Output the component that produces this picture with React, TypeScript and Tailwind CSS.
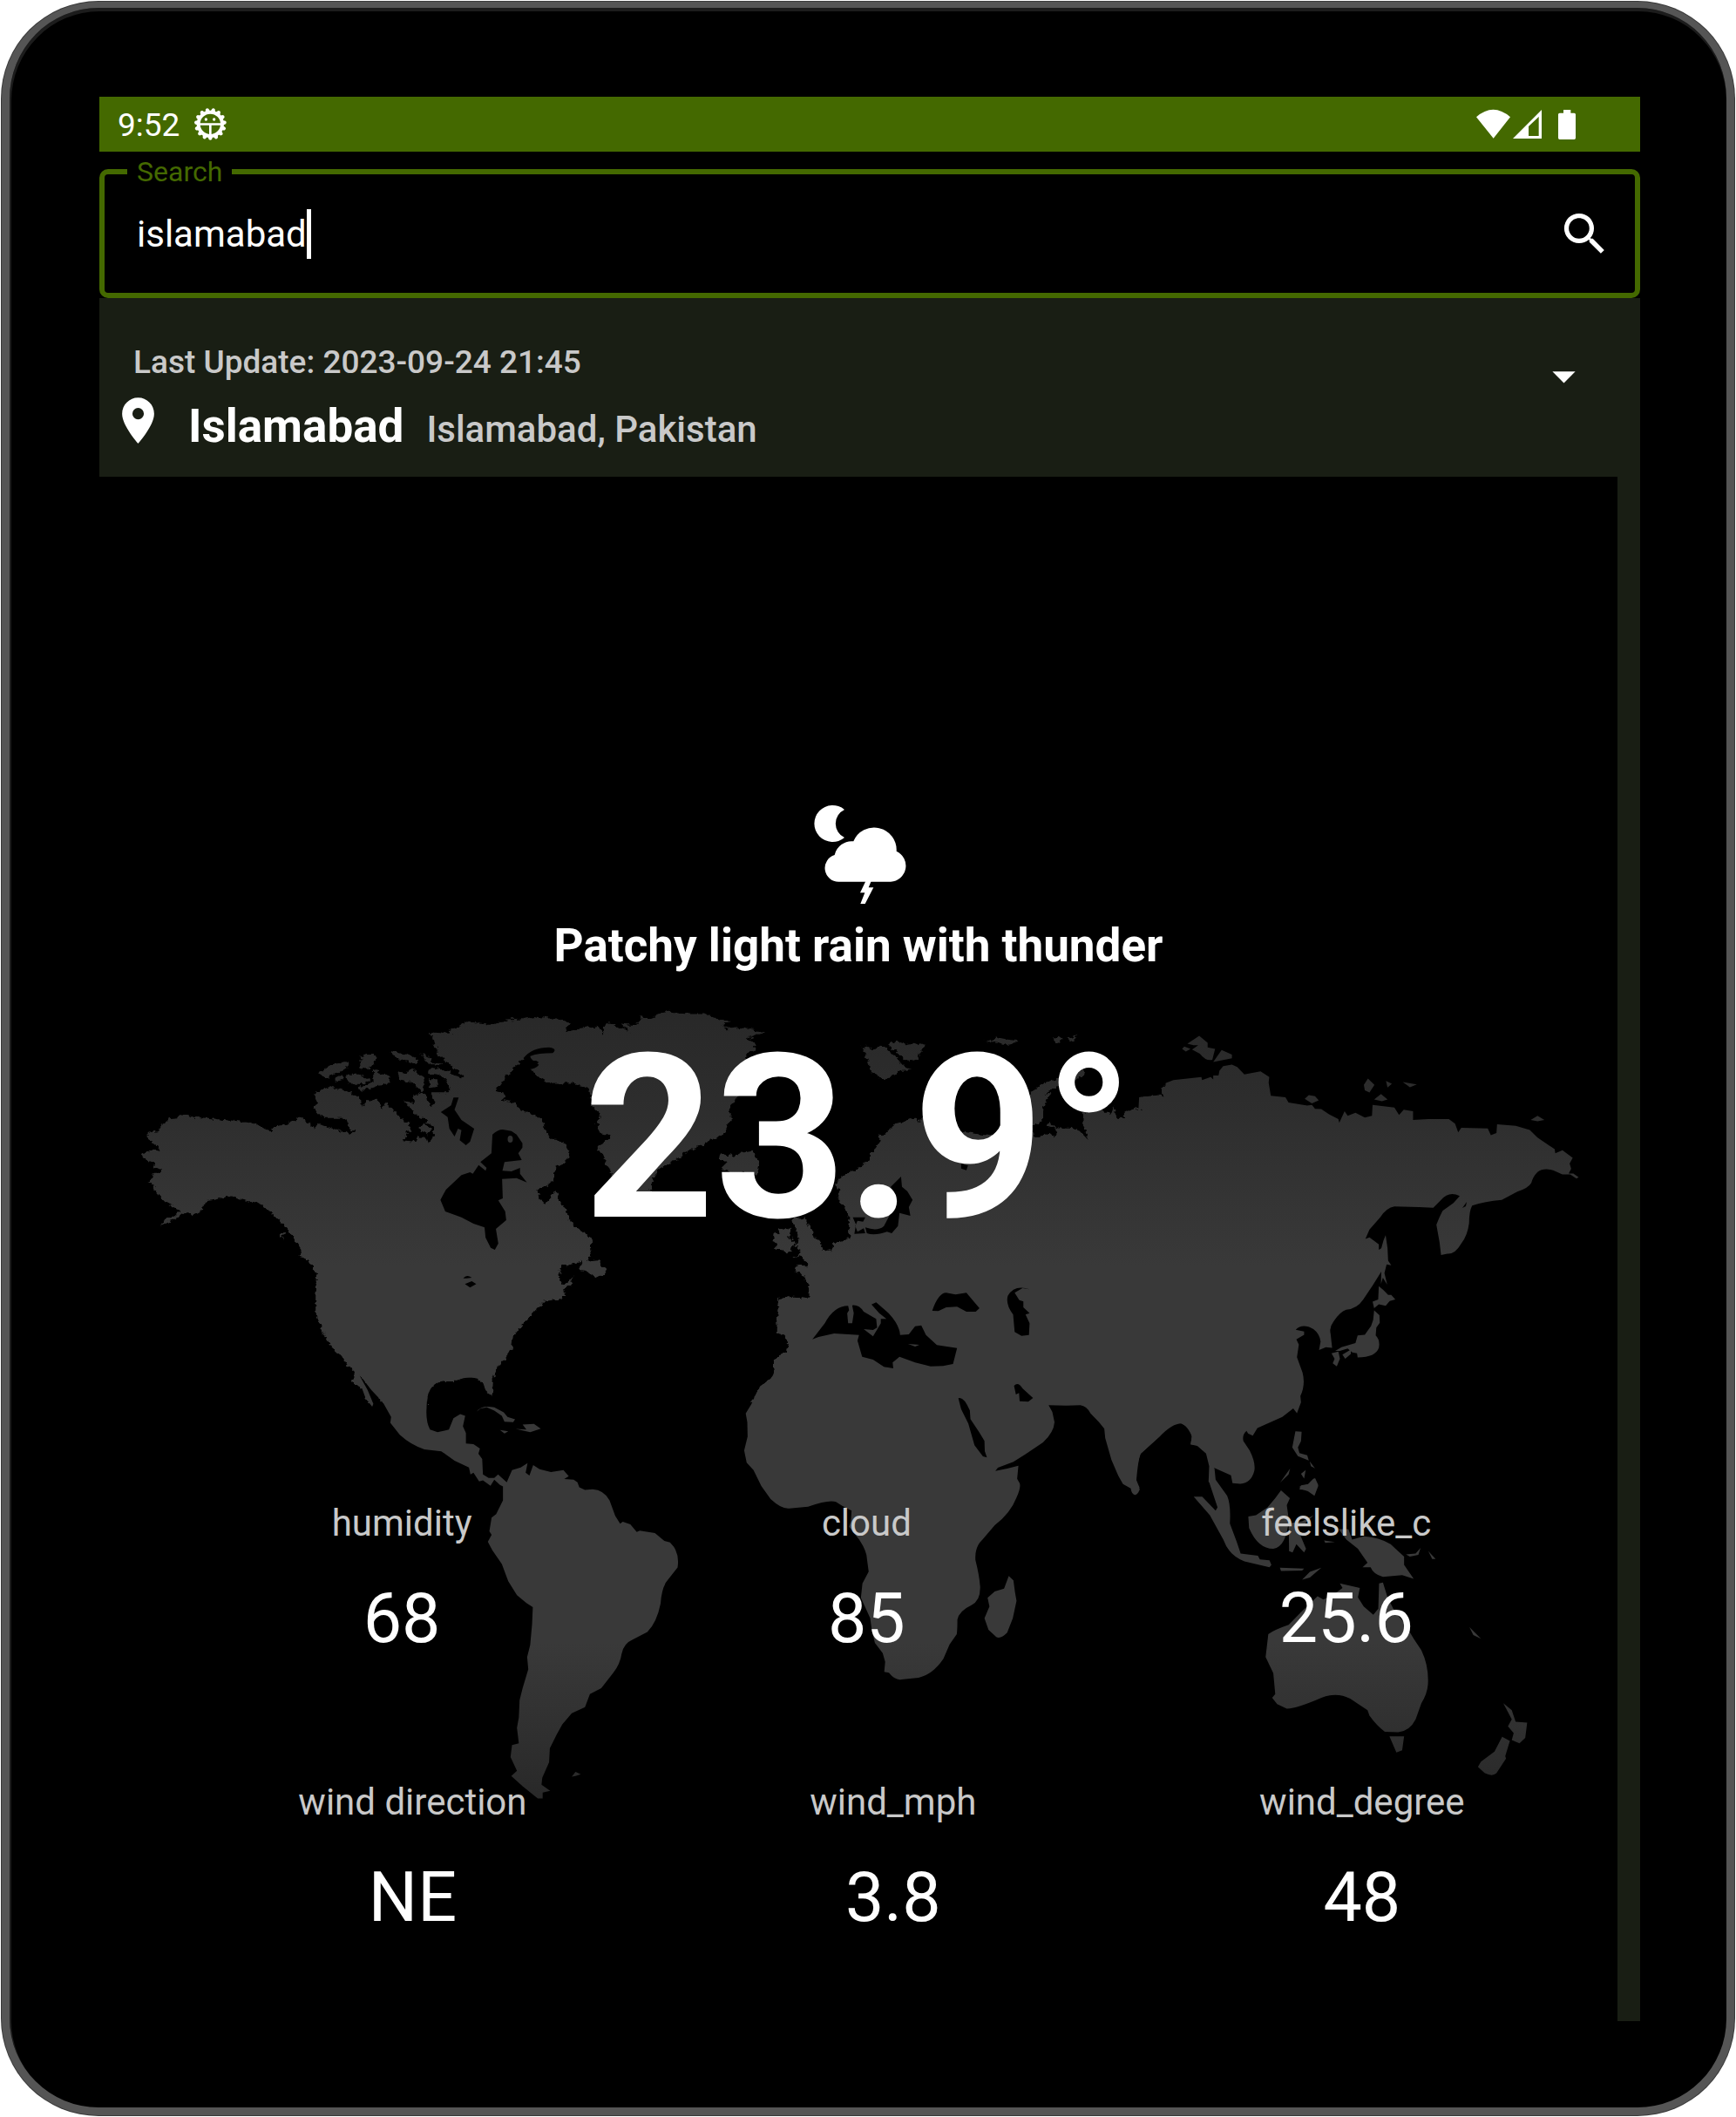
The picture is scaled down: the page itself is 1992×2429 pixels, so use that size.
import { useState } from "react";

function BugIcon() {
  const teeth = Array.from({ length: 15 }, (_, i) => i * 24);
  return (
    <svg className="size-[39px]" viewBox="36 33 117 117" fill="#fff" aria-hidden="true">
      <circle cx="94" cy="91" r="41" fill="none" stroke="#fff" strokeWidth="12" />
      {teeth.map((angle) => (
        <path key={angle} d="M84 130 L89 144 Q94 149 99 144 L104 130Z" transform={`rotate(${angle} 94 91)`} />
      ))}
      <path d="M54 88H134V95H54Z M90 95H98V132H90Z" />
      <circle cx="79" cy="75" r="5" />
      <circle cx="107" cy="75" r="5" />
    </svg>
  );
}

function SystemIcons() {
  return (
    <svg className="h-[60px] w-[134px]" viewBox="0 0 402 180" fill="#fff" aria-hidden="true">
      <path d="M30 64 Q88 13 147 64 L89 137Z" />
      <path fillRule="evenodd" d="M255 39V138H156Z M210 96V129H245V63Z" />
      <path d="M330 39H355V50H367Q372 50 372 55V136Q372 141 367 141H317Q312 141 312 136V55Q312 50 317 50H330Z" />
    </svg>
  );
}

function StormIcon() {
  return (
    <svg className="h-[140px] w-[130px]" viewBox="0 0 390 420" fill="#fff" aria-hidden="true">
      <path d="M147 57 A63 63 0 1 0 147 153 A53 53 0 0 1 147 57Z" />
      <path d="M127 305 A47 47 0 0 1 113 213 A60 60 0 0 1 178 166 A77 77 0 0 1 326 200 A55 55 0 0 1 306 305Z" />
      <path d="M220 303H239L230 325H247L218 381H202L217 343H201Z" />
    </svg>
  );
}

function WorldMap() {
  return (
    <svg
      className="absolute inset-0 h-full w-full"
      viewBox="114 547 1742 1772"
      preserveAspectRatio="xMidYMid meet"
      aria-hidden="true"
    >
      <defs>
        <linearGradient id="mapShade" gradientUnits="userSpaceOnUse" x1="0" y1="1150" x2="0" y2="2070">
          <stop offset="0" stopColor="#282828" />
          <stop offset="0.12" stopColor="#2d2d2d" />
          <stop offset="0.33" stopColor="#393939" />
          <stop offset="0.8" stopColor="#393939" />
          <stop offset="1" stopColor="#282828" />
        </linearGradient>
        <filter id="coast" x="-2%" y="-2%" width="104%" height="104%">
          <feTurbulence type="fractalNoise" baseFrequency="0.07" numOctaves="2" seed="4" result="noise" />
          <feDisplacementMap in="SourceGraphic" in2="noise" scale="20" xChannelSelector="R" yChannelSelector="G" />
        </filter>
        <mask id="land" maskUnits="userSpaceOnUse" x="114" y="547" width="1742" height="1772">
          <g fill="#fff">
            {/* North America */}
            <g transform="translate(140 1130) scale(.39541 .33333)" filter="url(#coast)">
              <path d="M180 442L190 450 205 455 230 457 260 460 300 466 330 468 360 474 380 478 410 490 432 508 440 490 470 480 500 465 515 450 540 475 560 495 570 480 600 490 630 500 665 512 675 505 650 480 655 465 640 458 590 458 570 445 558 425 565 400 562 370 600 352 640 362 655 368 675 378 690 385 692 408 700 415 715 395 745 400 752 428 765 408 785 425 800 450 830 475 838 500 825 505 828 522 818 535 850 540 858 520 885 530 890 545 905 520 905 490 885 475 885 460 870 458 850 445 835 420 815 400 850 405 845 380 870 372 885 385 890 410 900 420 905 400 895 370 950 370 955 360 940 325 915 308 890 305 895 285 950 295 960 310 975 315 985 322 998 310 970 290 965 280 940 260 920 235 905 200 895 162 940 170 950 180 990 185 945 160 1000 140 1200 140 1180 250 1165 252 1130 290 1095 335 1080 365 1105 370 1112 388 1100 395 1145 405 1155 435 1195 445 1222 465 1225 490 1240 530 1260 530 1285 548 1298 570 1290 610 1258 628 1252 670 1235 690 1205 705 1210 735 1230 755 1245 730 1258 708 1268 745 1285 765 1305 825 1340 850 1360 870 1362 930 1350 950 1385 945 1390 965 1408 985 1395 1005 1370 1003 1350 985 1325 980 1335 953 1275 970 1268 1000 1275 1028 1290 1030 1310 1003 1300 1035 1283 1050 1285 1070 1270 1082 1225 1088 1200 1120 1165 1165 1135 1210 1130 1250 1115 1285 1085 1320 1075 1360 1072 1412 1060 1400 1050 1370 1030 1352 1000 1350 965 1362 925 1362 900 1380 888 1405 885 1440 760 1440 735 1400 688 1340 700 1380 725 1440 715 1440 700 1395 670 1365 678 1335 655 1310 640 1280 607 1245 585 1200 570 1155 562 1130 562 1070 567 1005 550 965 530 940 515 935 520 910 497 870 470 825 430 780 395 750 350 740 312 727 270 740 240 745 235 775 210 790 180 785 150 810 125 820 110 832 120 812 145 800 170 775 130 750 100 715 93 700 98 690 75 680 90 655 115 640 95 630 90 610 70 605 55 582 95 565 108 575 100 550 75 530 75 510 105 505 115 480 140 462 160 460Z" />
              <path d="M567 305L600 280 640 265 660 265 655 285 625 305 590 320ZM690 268L700 255 688 248 715 240 738 240 735 265 720 288 692 285ZM775 228L800 232 830 240 855 255 855 270 825 262 795 250ZM650 308L690 308 722 328 700 342 655 340ZM615 322L635 310 645 325 625 332ZM685 355L730 335 728 290 745 300 760 305 778 310 775 340 740 345 700 362ZM800 300L820 305 840 290 870 310 880 340 870 367 840 335 805 325ZM868 235L895 250 900 268 932 272 925 280 890 275ZM888 325L915 325 918 350 892 355Z" />
              <path d="M860 495L878 478 898 498 885 515ZM459 853H474L466 875ZM1105 610L1140 622 1150 632 1130 642 1104 640Z" />
            </g>
            {/* Greenland */}
            <g transform="translate(500 900) scale(.57398 .35714)" filter="url(#coast)">
              <path d="M0 860L25 840 0 820 0 795 30 800 40 785 60 765 110 772 130 758 170 755 200 745 225 752 245 752 268 768 255 795 325 775 332 800 340 765 355 768 392 800 370 768 400 775 410 745 425 752 450 735 465 730 500 735 540 735 560 750 590 765 572 770 585 785 620 780 657 797 625 815 640 835 625 870 620 900 605 1000 590 1030 590 1080 570 1130 520 1165 480 1205 445 1235 425 1320 390 1350 350 1250 335 1190 325 1170 348 1130 320 1110 330 1060 310 1030 310 990 290 965 270 958 225 960 200 935 190 910 207 895 175 880 150 920 117 985 50 985 60 935 30 900Z" />
            </g>
            {/* Central and South America */}
            <g transform="translate(140 1500) scale(.43367 .39541)">
              <path d="M515 0L517 25 535 65 555 112 598 160 618 190 612 212 635 235 645 265 662 288 665 280 650 240 632 205 628 195 660 240 690 275 712 318 710 335 735 370Q765 400 800 412L845 418 880 445 918 465 922 485 930 480 945 505 955 502 975 518 985 500 1000 515 1008 520 1008 560 990 600 978 610 972 650 978 660 968 680 980 705 1005 745 1022 795 1045 835 1070 858 1087 870 1085 920 1080 980 1072 1015 1075 1050 1060 1105 1052 1140 1050 1190 1045 1220 1050 1265 1032 1270 1028 1305 1045 1345 1030 1360 1060 1390 1100 1425 1113 1425 1113 1408 1133 1403 1110 1385 1112 1365 1130 1320 1132 1280 1150 1240 1165 1210 1190 1178 1225 1160 1238 1122 1268 1105 1300 1060Q1318 1035 1322 1005 1328 975 1350 965L1390 942Q1415 915 1425 860 1428 810 1445 790L1470 755Q1475 720 1460 695L1450 682 1435 678 1410 655 1370 648 1362 652 1345 630 1325 622 1318 628 1305 605 1290 560Q1275 530 1245 528L1225 530 1210 522 1205 508 1195 500 1170 498 1182 490 1168 472 1135 478 1105 470 1088 458 1078 488 1068 480 1073 452 1055 465 1032 472 1018 508 995 485 985 495 970 495 955 485 953 440 943 425 947 410 930 397 910 395 910 365 902 345 908 315 895 310 877 322 865 355 835 362 815 355Q803 330 806 290 805 245 825 225 840 210 885 212 915 198 945 208L955 218 962 240 976 255Q982 240 978 210 980 185 995 165 1020 140 1027 122 1030 95 1035 80 1050 50 1100 0Z" />
              <path d="M938 303Q950 283 985 290L1010 305 1020 318 1040 325 1035 333 1012 332 1005 315 985 300 965 290 948 294ZM1042 353L1070 355 1060 340 1090 338 1108 352 1080 362ZM1000 356L1022 360 1012 366ZM1190 1362L1200 1348 1214 1355 1200 1360Z" />
            </g>
            {/* Europe and western Asia */}
            <g transform="translate(800 1130) scale(.35714 .33333)" filter="url(#coast)">
              <path d="M1568 325L1510 340 1490 360 1500 388 1490 380 1430 385 1420 405 1420 425 1437 435 1410 425 1380 437 1368 448 1378 460 1345 458 1340 415 1330 445 1310 435 1290 420 1240 440 1238 485 1252 510 1253 530 1230 505 1200 492 1150 490 1130 473 1125 485 1155 495 1150 525 1135 512 1120 515 1085 525 1075 480 1110 470 1108 435 1125 395 1135 372 1115 375 1165 345 1220 320 1248 305 1240 292 1200 310 1120 335 1075 365 1040 420 1030 500 940 520 820 500 725 455 710 475 703 458 685 460 655 475 630 485 600 520 580 513 590 540 575 560 560 575 552 600 520 630 500 640 475 655 455 670 440 690 458 705 450 720 460 745 480 780 488 800 488 870 465 880 435 890 432 912 402 918 395 885 380 870 360 835 345 800 305 805 320 845 328 870 312 900 332 912 325 930 300 942 330 934 352 955 355 970 318 968 315 985 335 995 358 1030 360 1070 350 1080 310 1073 258 1080 262 1120 255 1160 258 1200 275 1205 295 1230 285 1260 255 1280 245 1310 248 1335 235 1360 200 1385 175 1440 1568 1440Z" />
              <path d="M248 855L262 855 260 845 280 835 300 840 295 870 315 885 305 900 300 918 285 922 270 912 243 912 258 895 245 882ZM68 595L80 578 98 592 110 585 120 590 140 578 180 572 188 588 200 605 190 650 110 645 75 632 95 612ZM528 215L548 212 565 222 590 205 612 225 640 250 655 270 668 285 692 290 650 298 605 325 585 318 555 295 550 260ZM620 205L640 193 670 205 695 200 733 210 715 230 710 255 690 262 665 258 640 225 622 220ZM925 195L970 182 1005 190 1038 193 995 208 965 197ZM1145 185L1160 178 1175 182 1170 195 1152 203ZM1190 186L1222 170 1215 185 1198 192Z" />
            </g>
            {/* Eastern Asia and Japan */}
            <g transform="translate(1300 1150) scale(.35714)">
              <path d="M0 343L25 355 38 348 18 340 20 305 85 298 100 305 98 290 90 275 105 272 105 260 130 250 220 240 222 250 250 240 258 248 258 235 275 235 278 220 290 205 318 200 335 208 358 232 410 222 438 240 436 258 443 300 490 305 500 322 560 332 575 330 585 342 605 343 630 360 660 375 663 387 680 350 690 365 715 355 745 370 768 365 770 330 840 338 855 362 870 345 900 350 900 378 950 375 1015 375 1035 390 1045 418 1055 403 1140 405 1150 427 1168 420 1170 392 1230 397 1275 410 1300 435 1355 472 1357 485 1380 475 1413 500 1403 518 1408 535 1400 550 1415 550 1432 562 1425 566 1405 553 1380 553 1350 540Q1320 530 1300 545 1285 560 1280 580 1270 597 1235 608L1185 635Q1130 640 1090 653 1080 670 1080 710 1075 750 1055 775 1035 810 1010 808L990 812 985 770 975 715 985 690 995 670 1030 645 1050 622Q1015 605 990 635L965 660 920 658 840 656Q815 660 795 690L760 730 747 760 760 755 790 778 790 795 798 790 805 765 812 748 818 790 820 830 830 845 815 842 808 870 817 907 803 885 797 905 798 865 770 910 740 955Q720 985 685 988 665 995 645 1025 630 1045 635 1065L640 1110 620 1108 598 1117 603 1090Q600 1065 580 1050 545 1030 523 1052L550 1058 550 1068 525 1083 533 1100 527 1140 545 1190Q555 1230 538 1265L540 1285 527 1320 515 1305 480 1332 400 1368 385 1392 370 1385 365 1377Q350 1390 355 1410L375 1440Q395 1480 390 1505 380 1545 345 1547L320 1545 315 1520 260 1495 258 1525 280 1568 262 1568 243 1540 245 1490 235 1450 207 1425 185 1420 190 1395Q170 1350 145 1352 120 1355 85 1395L25 1450Q12 1480 10 1535L22 1568 0 1568Z" />
              <path d="M790 912L805 925 820 940 830 940 843 955 825 960 812 975 790 970 775 983 770 962 788 955ZM775 990L792 1005 793 1030 782 1045 780 1070Q795 1085 790 1110 780 1140 722 1141L720 1128 705 1125 690 1112 665 1120 650 1120 670 1108 715 1095 722 1070 745 1068 765 1040 772 1020ZM638 1128L660 1122 665 1145 655 1170 642 1160 648 1145ZM673 1132L700 1116 700 1130 682 1145ZM522 1378L542 1380 540 1410 530 1430 535 1448 560 1455 565 1472 530 1458 512 1430ZM568 1475L585 1497 572 1490ZM473 1543L505 1498 500 1517ZM540 1515L555 1503 550 1530ZM535 1565L540 1552 565 1548 585 1528 595 1550 585 1568Z" />
              <path d="M158 150L165 142 185 150 170 158ZM175 133L213 108 240 130 240 145 264 150 255 185Q235 190 215 165L190 152 210 138 195 138ZM258 192L285 153 318 168 318 180ZM742 265L755 245 776 265 760 290 745 283ZM813 253L832 262 818 274ZM867 256L912 264 890 273ZM775 312L797 295 818 312 800 318ZM552 310L565 298 585 302 597 315 575 325ZM1278 378L1300 365 1322 378 1300 382Z" />
            </g>
            {/* Africa, Arabia and India */}
            <g transform="translate(820 1560) scale(.35714 .33333)">
              <path d="M190 0L192 35Q190 60 170 75L148 90 132 120 120 150 100 185 105 215 106 265 95 313 103 355 125 380 150 435 180 480Q215 515 240 512L300 506Q370 480 390 490L410 503 440 520 438 555 432 575 465 620Q490 660 490 690L495 730 475 770 470 820 485 855 500 890 505 930 515 975 540 1010 548 1040 545 1075 560 1078Q580 1105 600 1101L655 1095Q700 1085 735 1030L755 980 778 945Q780 930 780 895 785 865 825 845 855 830 853 780 850 740 838 690 835 645 860 620L900 570Q950 530 970 475 985 440 980 425L972 410 976 365 940 375 902 383 910 372 960 352 1000 325 1055 285Q1090 250 1092 215L1085 180 1073 157 1130 158 1175 157Q1195 160 1208 185L1235 215 1252 238 1255 270 1275 345 1297 400 1312 428 1337 443Q1340 465 1352 466 1365 460 1365 440L1355 415Q1360 350 1368 325L1430 265Q1470 220 1500 220 1530 235 1533 265L1530 292 1550 295 1568 312 1568 0Z" />
              <path d="M945 745L960 760 965 800 970 830 958 890 940 940Q920 962 905 955L880 930 867 890 883 850 877 820 900 798 930 788Z" />
            </g>
            {/* South-east Asia and Oceania */}
            <g transform="translate(1300 1600) scale(.44133 .5287)">
              <path d="M200 158L212 160 215 185 245 220Q255 240 252 280L270 320 280 345 325 350 330 358 355 360 360 370 355 375 290 362Q250 350 235 315L200 262 158 222 180 222 215 252 220 245 200 195ZM382 376L445 378 440 382 385 383ZM440 402L460 385 490 376 460 397ZM370 225L385 208 408 225 400 240 405 270Q400 330 365 335 325 335 302 290L300 265 320 262 350 245ZM405 280L440 275 470 262 445 282 425 285 450 335 445 343 425 325 415 343 406 340ZM433 200L455 195 470 182 482 198 472 220 455 210 437 205Z" />
              <path d="M535 292L560 292 570 315 600 308Q640 310 670 325L705 352 705 370 730 400 700 392 650 396Q625 390 618 375L597 375 610 365 585 335 555 315ZM497 317L525 320 500 322ZM710 347L735 345 748 333 742 348 720 352ZM768 340L787 357 778 357ZM875 505L905 530 885 522Z" />
              <path d="M345 570L352 520Q370 510 405 500L440 470 480 438 495 445 520 435 545 420 538 410 590 420 585 440 600 460 625 478 638 465 640 410 650 408 662 440 680 470 705 495 730 530 750 555Q770 590 767 630 765 650 750 670L735 705Q720 730 690 733L655 732Q635 720 615 697L610 685 565 660Q530 645 490 658 430 680 400 682L375 672 362 658 370 650 365 605ZM667 742L705 742 700 772 685 777ZM963 670L985 685 995 710 1025 712 1020 745 1005 757 985 750 990 735 975 720 985 705ZM960 743L980 752 968 785 970 790 945 822Q935 830 915 822L897 808 905 797 940 775Z" />
            </g>
          </g>
          {/* Inland waters */}
          <g fill="#000">
            <g transform="translate(140 1130) scale(.39541 .33333)">
              <path d="M1075 515Q1090 498 1105 498L1130 503 1145 515 1162 545 1162 560 1150 580 1160 603 1110 610 1104 640 1130 642 1155 630 1155 650 1175 680 1145 665 1103 668 1105 735 1092 742 1112 780 1115 810 1085 840 1092 890 1082 912 1070 905 1055 870 1052 835 1020 822 985 800 938 780 924 740 940 705 985 655 1010 645 1018 650 1035 620 1055 640 1058 630 1040 610 1072 580ZM925 438L955 415 962 388 977 388 965 430 985 465 1022 495 1010 540 998 552 980 535 985 500 975 495 965 522 950 495 945 455ZM1165 252Q1190 215 1240 215 1265 220 1250 235 1210 235 1185 245 1182 255 1210 275 1200 290 1180 290ZM990 1010Q1000 995 1015 1008L1000 1010ZM995 1030L1015 1020 1028 1030 1010 1042Z" />
            </g>
            <g transform="translate(800 1130) scale(.35714 .33333)">
              <path d="M655 660L622 695 640 740 620 790 600 830Q580 850 540 835L545 855Q570 865 610 850L625 855 645 830 650 785 685 795 680 765 692 740 675 710 658 695ZM848 616L870 622 865 638 848 632Z" />
              <path d="M500 800H540L533 815 515 812 508 830 515 850 535 838 540 855 505 857 510 825Z" />
              <path d="M755 1122Q775 1060 800 1060L830 1066 865 1060 885 1085 907 1113 895 1125 865 1125 835 1108 800 1110 775 1123ZM1068 1048L1045 1044 1020 1060 1035 1085 1048 1090 1048 1110 1068 1130 1055 1135 1068 1165 1066 1205 1042 1208 1020 1195 1015 1135Q990 1100 998 1070 1020 1030 1068 1048Z" />
              <path d="M370 1220L410 1165Q440 1105 485 1105L488 1120 482 1130 485 1165 498 1165 503 1130 498 1103Q520 1100 535 1125L575 1150 578 1180 565 1188 535 1185 565 1210 590 1165 590 1150 608 1150 585 1130 560 1100 575 1093 615 1130Q650 1170 652 1205L680 1203 700 1175 720 1172 735 1205 770 1240 835 1250 822 1305 790 1312 750 1313 700 1300 650 1280 628 1300 630 1320 600 1315 565 1290 530 1280 515 1225 520 1205 440 1200 390 1212Z" />
            </g>
            <g transform="translate(820 1560) scale(.35714 .33333)">
              <path d="M783 133Q800 125 820 175L822 205 850 250 867 280 868 315 875 337 862 333 835 295 815 220 792 170ZM962 90Q975 75 990 100L1023 132 1008 145 980 143 978 115 968 120Z" />
            </g>
            <path d="M1678 1386L1683 1379 1682 1384Z" />
          </g>
          <path fill="#fff" d="M1042 1542L1055 1543 1050 1545ZM941 1507L948 1507 945 1510Z" />
          <ellipse cx="585.5" cy="1307" rx="3" ry="4" fill="#fff" />
        </mask>
      </defs>
      <rect x="114" y="547" width="1742" height="1772" fill="url(#mapShade)" mask="url(#land)" />
    </svg>
  );
}

function Stat({ label, value }: { label: string; value: string }) {
  return (
    <div className="flex flex-col items-center gap-[39px]">
      <dt className="text-[42px] leading-[49px] text-[#c9c9c9]">{label}</dt>
      <dd className="text-[79px] leading-[93px] text-white">{value}</dd>
    </div>
  );
}

const currentStats = [
  { label: "humidity", value: "68" },
  { label: "cloud", value: "85" },
  { label: "feelslike_c", value: "25.6" },
];

const windStats = [
  { label: "wind direction", value: "NE" },
  { label: "wind_mph", value: "3.8" },
  { label: "wind_degree", value: "48" },
];

function StatRow({ stats }: { stats: { label: string; value: string }[] }) {
  return (
    <dl className="flex justify-around">
      {stats.map((stat) => (
        <Stat key={stat.label} label={stat.label} value={stat.value} />
      ))}
    </dl>
  );
}

export default function App() {
  const [query, setQuery] = useState("islamabad");

  return (
    <div className="flex min-h-screen flex-col bg-white p-px font-[Roboto,sans-serif]">
      <div className="flex flex-1 flex-col rounded-[112px] bg-[#3a3a3a] p-px">
        <div className="flex flex-1 flex-col rounded-[111px] border-[9px] border-t-[7px] border-[#555] bg-black pt-[102px] pr-[99px] pb-[99px] pl-[103px] shadow-[inset_1px_3px_0_1px_#1c1c1c]">
          <header className="flex h-[63px] items-center justify-between bg-[#446900] pr-16 pl-[21px] text-white">
            <div className="flex items-center gap-4">
              <time className="pt-[2px] text-[37px] leading-[44px]">9:52</time>
              <BugIcon />
            </div>
            <SystemIcons />
          </header>

          <form role="search" className="mt-1" onSubmit={(e) => e.preventDefault()}>
            <fieldset className="min-w-0 rounded-[10px] border-6 border-[#446900] px-[26px]">
              <legend className="px-[11px] text-[32px] leading-[38px] text-[#446900]">
                <label htmlFor="city">Search</label>
              </legend>
              <div className="mb-4 flex h-[104px] items-center justify-between pl-[11px]">
                <div className="flex min-w-0 items-center">
                  <input
                    id="city"
                    type="text"
                    value={query}
                    onChange={(e) => setQuery(e.target.value)}
                    className="field-sizing-content min-w-0 bg-transparent text-[42px] leading-[57px] text-white caret-transparent outline-none"
                  />
                  <span className="h-[57px] w-[5px] bg-white" />
                </div>
                <button type="submit" aria-label="Search" className="shrink-0">
                  <svg className="size-[63px]" viewBox="0 0 24 24" fill="#fff" aria-hidden="true">
                    <path d="M15.5 14h-.79l-.28-.27A6.471 6.471 0 0 0 16 9.5 6.5 6.5 0 1 0 9.5 16c1.61 0 3.09-.59 4.23-1.57l.27.28v.79l5 4.99L20.49 19l-4.99-5zm-6 0C7.01 14 5 11.99 5 9.5S7.01 5 9.5 5 14 7.01 14 9.5 11.99 14 9.5 14z" />
                  </svg>
                </button>
              </div>
            </fieldset>
          </form>

          <main className="flex flex-1 flex-col bg-[#191e14]">
            <section className="flex items-start justify-between pt-[52px] pr-14 pb-7 pl-[13px]">
              <div>
                <p className="pl-[26px] text-[37px] leading-[44px] font-medium text-[#c9c9c9]">
                  Last Update: 2023-09-24 21:45
                </p>
                <div className="mt-[13px] flex gap-[26px]">
                  <svg className="size-[63px]" viewBox="0 0 24 24" fill="#fff" aria-hidden="true">
                    <path d="M12 2C8.13 2 5 5.13 5 9c0 5.25 7 13 7 13s7-7.75 7-13c0-3.87-3.13-7-7-7zm0 9.5a2.5 2.5 0 0 1 0-5 2.5 2.5 0 0 1 0 5z" />
                  </svg>
                  <div className="flex items-baseline gap-[26px] pt-2">
                    <h1 className="text-[53px] leading-[60px] font-bold text-white">Islamabad</h1>
                    <p className="text-[42px] leading-[49px] font-medium text-[#c9c9c9]">Islamabad, Pakistan</p>
                  </div>
                </div>
              </div>
              <button type="button" aria-label="Show details" className="mt-[6px]">
                <svg className="size-[63px]" viewBox="0 0 24 24" fill="#fff" aria-hidden="true">
                  <path d="M7 10l5 5 5-5z" />
                </svg>
              </button>
            </section>

            <section className="relative mr-[26px] flex flex-1 flex-col bg-black pt-[363px] pb-[94px]">
              <WorldMap />
              <div className="relative flex flex-col items-center text-white">
                <StormIcon />
                <h2 className="mt-[5px] text-[53px] leading-[60px] font-bold">Patchy light rain with thunder</h2>
                <p className="mt-[38px] text-[263px] leading-[307px] font-bold">23.9°</p>
              </div>
              <div className="relative mt-[263px] flex flex-col gap-[139px] pr-[13px] pl-[66px]">
                <StatRow stats={currentStats} />
                <StatRow stats={windStats} />
              </div>
            </section>
          </main>
        </div>
      </div>
    </div>
  );
}
